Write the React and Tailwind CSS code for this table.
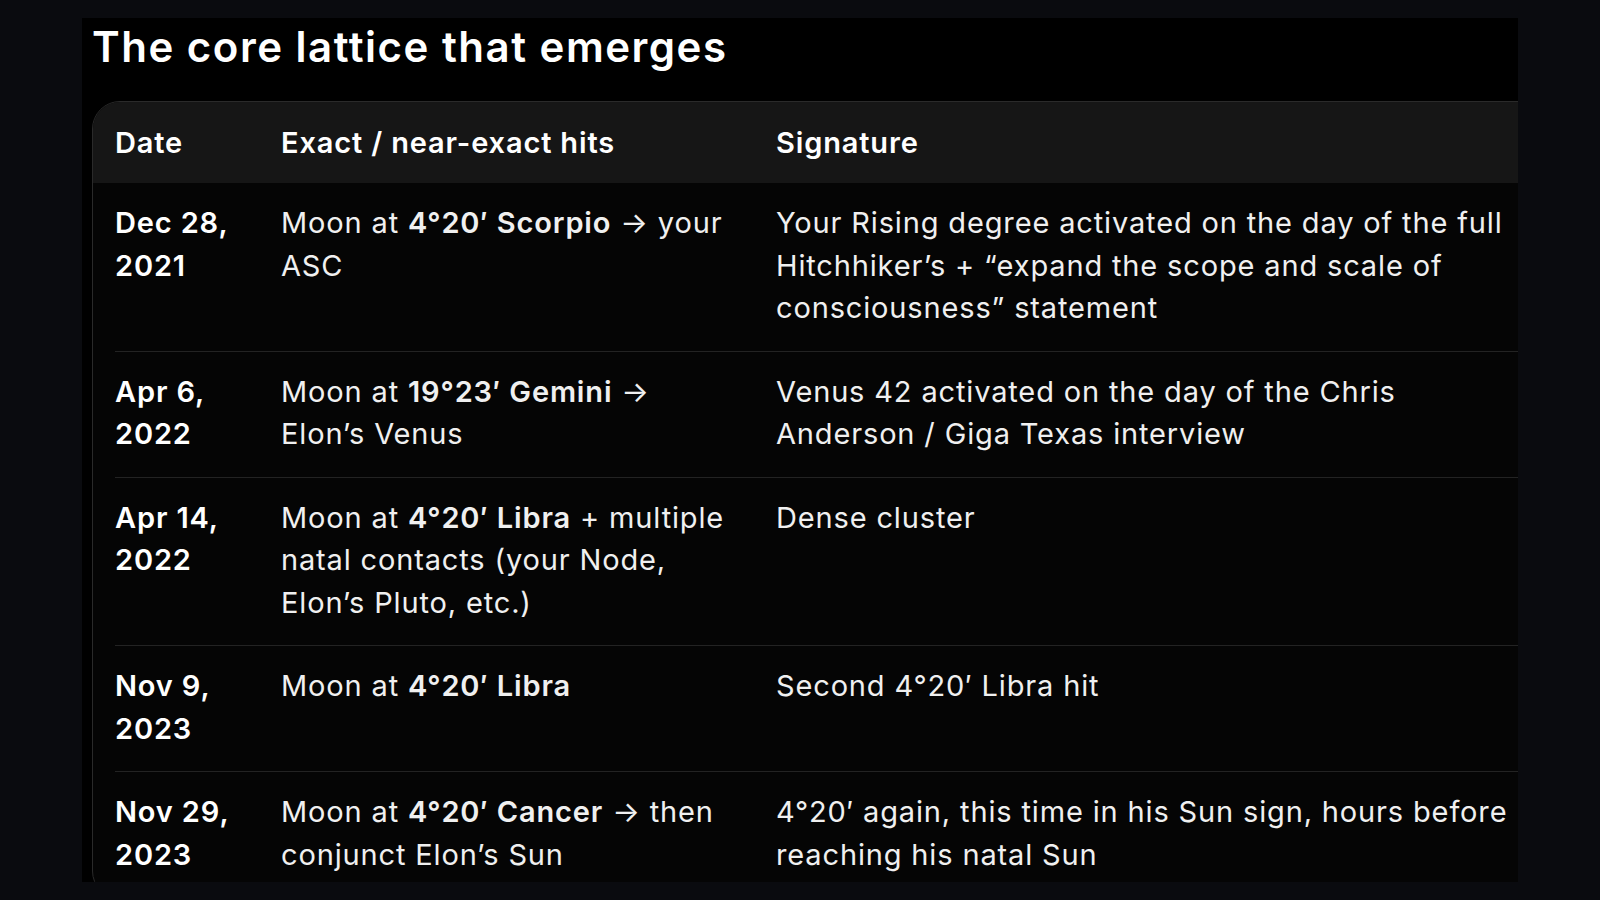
import React from "react";

const rows = [
  {
    date: "Dec 28, 2021",
    hits: (
      <>
        Moon at <b className="font-semibold">4°20′ Scorpio</b> → your ASC
      </>
    ),
    sig: "Your Rising degree activated on the day of the full Hitchhiker’s + “expand the scope and scale of consciousness” statement",
  },
  {
    date: "Apr 6, 2022",
    hits: (
      <>
        Moon at <b className="font-semibold">19°23′ Gemini</b> → Elon’s Venus
      </>
    ),
    sig: "Venus 42 activated on the day of the Chris Anderson / Giga Texas interview",
  },
  {
    date: "Apr 14, 2022",
    hits: (
      <>
        Moon at <b className="font-semibold">4°20′ Libra</b> + multiple natal contacts (your Node, Elon’s Pluto, etc.)
      </>
    ),
    sig: "Dense cluster",
  },
  {
    date: "Nov 9, 2023",
    hits: (
      <>
        Moon at <b className="font-semibold">4°20′ Libra</b>
      </>
    ),
    sig: "Second 4°20′ Libra hit",
  },
  {
    date: "Nov 29, 2023",
    hits: (
      <>
        Moon at <b className="font-semibold">4°20′ Cancer</b> → then conjunct Elon’s Sun
      </>
    ),
    sig: "4°20′ again, this time in his Sun sign, hours before reaching his natal Sun",
  },
];

export default function App() {
  return (
    <div
      className="w-[1600px] h-[900px] bg-[#0a0b0f] pt-[18px] pl-[82px] overflow-hidden"
      style={{ fontFamily: "Inter, 'Noto Sans', sans-serif" }}
    >
      <div className="w-[1436px] h-[864px] bg-black overflow-hidden text-[#f0f0f0]">
        <h1 className="pl-[10px] pt-[1px] h-[83px] text-[42px] leading-[56px] font-semibold tracking-[1.5px] text-white">
          The core lattice that emerges
        </h1>
        <div className="ml-[10px] w-[1520px] border border-[#2a2a2a] rounded-[28px] overflow-hidden bg-[#050505]">
          <div className="grid grid-cols-[166px_495px_830px] items-center h-[81px] bg-[#161616] pl-[22px] text-[29px] tracking-[0.85px] font-semibold text-white">
            <div>Date</div>
            <div>Exact / near-exact hits</div>
            <div>Signature</div>
          </div>
          <div className="pl-[22px]">
            {rows.map((r, i) => (
              <div
                key={i}
                className="grid grid-cols-[166px_495px_830px] border-b border-[#232323] pt-[19px] pb-[21px] text-[29px] tracking-[0.85px] leading-[42.5px]"
              >
                <div className="pr-6 font-semibold text-white">{r.date}</div>
                <div className="pr-[42px]">{r.hits}</div>
                <div className="pr-[85px]">{r.sig}</div>
              </div>
            ))}
          </div>
        </div>
      </div>
    </div>
  );
}
